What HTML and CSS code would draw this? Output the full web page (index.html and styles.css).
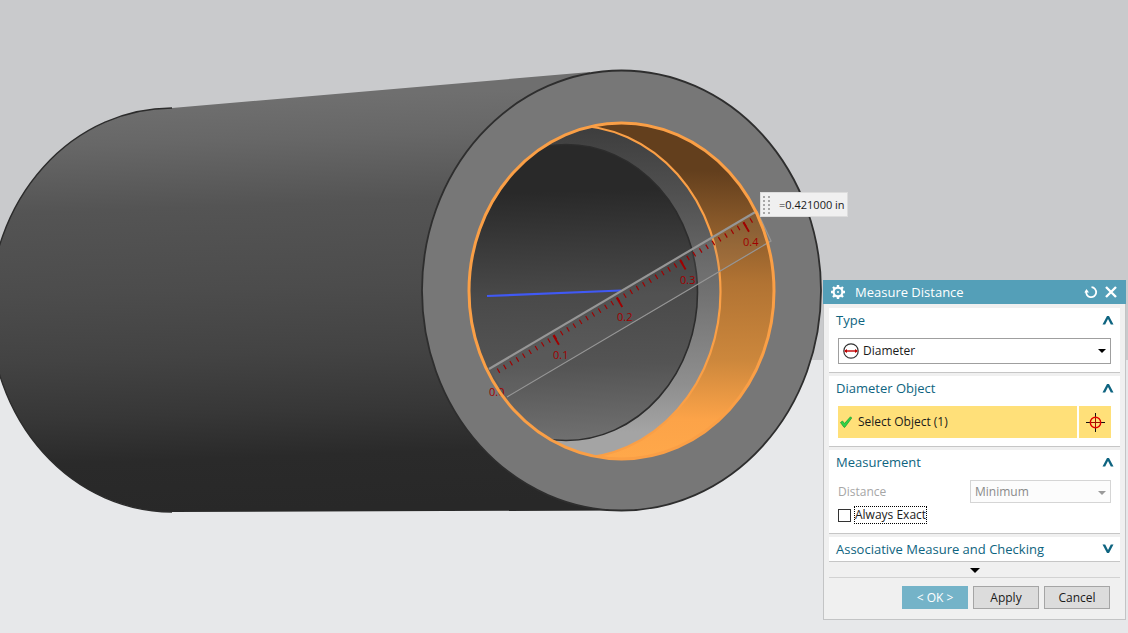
FILE: index.html
```html
<!DOCTYPE html>
<html lang="en">
<head>
    <meta charset="UTF-8">
    <meta name="viewport" content="width=device-width, initial-scale=1.0">
    <title>Measure Distance</title>
    <link rel="stylesheet" href="styles.css">
</head>
<body>
    <main class="viewport">
        <svg class="model" viewBox="0 0 1128 633" role="img" aria-label="Tube with counterbore">
            <defs>
                <linearGradient id="body-shade" gradientUnits="userSpaceOnUse" x1="200" y1="100" x2="214" y2="512">
                    <stop offset="0" stop-color="#6f6f6f"/>
                    <stop offset=".1" stop-color="#676767"/>
                    <stop offset=".26" stop-color="#545454"/>
                    <stop offset=".46" stop-color="#4c4c4c"/>
                    <stop offset=".62" stop-color="#434343"/>
                    <stop offset=".76" stop-color="#373737"/>
                    <stop offset=".87" stop-color="#2a2a2a"/>
                    <stop offset="1" stop-color="#282828"/>
                </linearGradient>
                <linearGradient id="orange-shade" gradientUnits="userSpaceOnUse" x1="680" y1="123" x2="672" y2="459">
                    <stop offset="0" stop-color="#633f1d"/>
                    <stop offset=".14" stop-color="#633f1d"/>
                    <stop offset=".3" stop-color="#8a5a2a"/>
                    <stop offset=".47" stop-color="#b17333"/>
                    <stop offset=".7" stop-color="#cc873c"/>
                    <stop offset=".88" stop-color="#fca348"/>
                    <stop offset="1" stop-color="#ffa84a"/>
                </linearGradient>
                <linearGradient id="step-shade" gradientUnits="userSpaceOnUse" x1="0" y1="126" x2="0" y2="459">
                    <stop offset="0" stop-color="#3d3d3d"/>
                    <stop offset=".2" stop-color="#505050"/>
                    <stop offset=".38" stop-color="#646464"/>
                    <stop offset=".6" stop-color="#7c7c7c"/>
                    <stop offset=".78" stop-color="#8f8f8f"/>
                    <stop offset=".92" stop-color="#a4a4a4"/>
                    <stop offset="1" stop-color="#a4a4a4"/>
                </linearGradient>
                <linearGradient id="bore-shade" gradientUnits="userSpaceOnUse" x1="560" y1="144" x2="569" y2="440">
                    <stop offset="0" stop-color="#292929"/>
                    <stop offset=".16" stop-color="#292929"/>
                    <stop offset=".34" stop-color="#3a3a3a"/>
                    <stop offset=".52" stop-color="#4a4a4a"/>
                    <stop offset=".75" stop-color="#545454"/>
                    <stop offset="1" stop-color="#707070"/>
                </linearGradient>
                <clipPath id="counterbore">
                    <ellipse cx="621.500" cy="291" rx="152" ry="168"/>
                </clipPath>
            </defs>

            <!-- tube body -->
            <path d="M172 108 L590 72 L622 510.500 L172 512 A182 202 0 0 1 172 108 Z" fill="url(#body-shade)"/>
            <path d="M172 512 A182 202 0 0 1 172 108" fill="none" stroke="#2c2c2c" stroke-width="1.400"/>
            <ellipse cx="621.500" cy="290.500" rx="199.500" ry="220" fill="#777" stroke="#2e2e2e" stroke-width="1.800"/>

            <!-- inside of the tube -->
            <g clip-path="url(#counterbore)">
                <rect x="469" y="122" width="306" height="338" fill="url(#orange-shade)"/>
                <ellipse cx="573.500" cy="292" rx="147" ry="166.500" fill="url(#step-shade)" stroke="#fa9f46" stroke-width="2.200"/>
                <ellipse cx="566" cy="292.500" rx="131.500" ry="148" fill="url(#bore-shade)" stroke="#2d2d2d" stroke-width="1.600"/>
            </g>
            <path d="M487 296 L621 290.500" stroke="#4059f5" stroke-width="2.200"/>

            <!-- ruler -->
            <path d="M489 369 L757 211 L771 242 L507 397 Z" fill="#888" fill-opacity=".12"/>
            <path d="M757 211 L771 241 L507 397" fill="none" stroke="#969696" stroke-width="1.200"/>
            <path d="M489 369 L757 211" stroke="#969696" stroke-width="2.200"/>
            <path class="ticks" d="M498 371 L752 220" stroke-width="5" stroke-dasharray=".16 .84" pathLength="40.200"/>
            <path class="ticks" d="M555.300 340.500 L747 226.500" stroke-width="11" stroke-dasharray=".026 .974" pathLength="3.026"/>
            <g class="ruler-text">
                <text x="489" y="396">0.0</text>
                <text x="553" y="359">0.1</text>
                <text x="617" y="321">0.2</text>
                <text x="680" y="284">0.3</text>
                <text x="743" y="246">0.4</text>
            </g>
            <ellipse cx="621.500" cy="291" rx="152.500" ry="168" fill="none" stroke="#fa9f46" stroke-width="3"/>
        </svg>
        <div class="readout">
            <svg width="8" height="20" viewBox="0 0 8 20" aria-hidden="true">
                <path d="M1 1V20M6 1V20" stroke="#a8a8a8" stroke-width="2" stroke-dasharray="2 2"/>
            </svg>
            <output>=0.421000 in</output>
        </div>
    </main>

    <form class="dialog" aria-labelledby="dialog-title">
        <header class="title-bar">
            <svg width="14" height="14" viewBox="0 0 14 14" aria-hidden="true">
                <circle cx="7" cy="7" r="4.400" fill="none" stroke="#fff" stroke-width="2.200"/>
                <path d="M7 0V3M7 11V14M0 7H3M11 7H14M2 2L4 4M10 10L12 12M12 2L10 4M4 10L2 12" stroke="#fff" stroke-width="2.400"/>
                <circle cx="7" cy="7" r="1" fill="#fff"/>
            </svg>
            <h1 id="dialog-title">Measure Distance</h1>
            <button type="button" class="icon-button" aria-label="Reset">
                <svg width="14" height="14" viewBox="0 0 14 14">
                    <path d="M7.500 2.200A5 5 0 1 1 2.300 6" fill="none" stroke="#fff" stroke-width="1.800"/>
                    <path d="M.3 7.500L2.500 4L5 7.500Z" fill="#fff"/>
                </svg>
            </button>
            <button type="button" class="icon-button" aria-label="Close">
                <svg width="14" height="14" viewBox="0 0 14 14">
                    <path d="M2 2L12 12M12 2L2 12" stroke="#fff" stroke-width="2.400"/>
                </svg>
            </button>
        </header>

        <div class="sections">
            <section class="group type-group">
                <div class="group-title">
                    <h2><label for="type">Type</label></h2>
                    <button type="button" class="icon-button" aria-label="Collapse Type">
                        <svg width="12" height="10" viewBox="0 0 12 10"><path class="chevron" d="M.5 9.500L5 1H7L11.500 9.500H8.800L6 4L3.200 9.500Z"/></svg>
                    </button>
                </div>
                <div class="combo type-combo">
                    <svg class="combo-icon" width="16" height="16" viewBox="0 0 16 16" aria-hidden="true">
                        <circle cx="8" cy="8" r="7.200" fill="#fff" stroke="#333" stroke-width="1.200"/>
                        <path d="M2 8H14" stroke="#c00000" stroke-width="1.400"/>
                        <path d="M1 8L4 6V10ZM15 8L12 6V10Z" fill="#c00000"/>
                    </svg>
                    <select id="type"><option>Diameter</option></select>
                    <svg class="combo-arrow" width="8" height="4" viewBox="0 0 8 4" aria-hidden="true"><path d="M0 0H8L4 4Z"/></svg>
                </div>
            </section>

            <section class="group object-group">
                <div class="group-title">
                    <h2>Diameter Object</h2>
                    <button type="button" class="icon-button" aria-label="Collapse Diameter Object">
                        <svg width="12" height="10" viewBox="0 0 12 10"><path class="chevron" d="M.5 9.500L5 1H7L11.500 9.500H8.800L6 4L3.200 9.500Z"/></svg>
                    </button>
                </div>
                <div class="select-row">
                    <button type="button" class="select-object">
                        <svg width="12" height="12" viewBox="0 0 12 12" aria-hidden="true">
                            <path d="M.5 6.500L2.500 5L4.500 7.500L10.500 .8L11.700 2L4.800 11.300H4Z" fill="#2fd545" stroke="#1f9e35" stroke-width=".8"/>
                        </svg>
                        Select Object (1)
                    </button>
                    <button type="button" class="point-button" aria-label="Select point">
                        <svg width="20" height="20" viewBox="0 0 20 20">
                            <path d="M10.500 1V20M1 10.500H20" stroke="#111" stroke-width="1"/>
                            <circle cx="10.500" cy="10.500" r="5.200" fill="none" stroke="#e00000" stroke-width="1.400"/>
                            <path d="M10.500 6V15M6 10.500H15" stroke="#a01000" stroke-width="1"/>
                        </svg>
                    </button>
                </div>
            </section>

            <section class="group measure-group">
                <div class="group-title">
                    <h2>Measurement</h2>
                    <button type="button" class="icon-button" aria-label="Collapse Measurement">
                        <svg width="12" height="10" viewBox="0 0 12 10"><path class="chevron" d="M.5 9.500L5 1H7L11.500 9.500H8.800L6 4L3.200 9.500Z"/></svg>
                    </button>
                </div>
                <div class="distance-row">
                    <label for="distance">Distance</label>
                    <div class="combo distance-combo">
                        <select id="distance" disabled><option>Minimum</option></select>
                        <svg class="combo-arrow" width="8" height="4" viewBox="0 0 8 4" aria-hidden="true"><path d="M0 0H8L4 4Z"/></svg>
                    </div>
                </div>
                <div class="check-row">
                    <input type="checkbox" id="exact">
                    <label for="exact">Always Exact</label>
                </div>
            </section>

            <section class="group">
                <div class="group-title">
                    <h2>Associative Measure and Checking</h2>
                    <button type="button" class="icon-button" aria-label="Expand Associative Measure and Checking">
                        <svg width="12" height="10" viewBox="0 0 12 10"><path class="chevron" d="M.5 .5L5 9H7L11.500 .5H8.800L6 6L3.200 .5Z"/></svg>
                    </button>
                </div>
            </section>
        </div>

        <button type="button" class="more" aria-label="Show more">
            <svg width="10" height="5" viewBox="0 0 10 5"><path d="M0 0H10L5 5Z"/></svg>
        </button>

        <footer class="actions">
            <button type="submit" class="ok">&lt; OK &gt;</button>
            <button type="button">Apply</button>
            <button type="button">Cancel</button>
        </footer>
    </form>
</body>
</html>
```

FILE: styles.css
```css
*{
    box-sizing: border-box;
}
body{
    margin: 0;
    min-height: 100vh;
    overflow: hidden;
    font-family: "Open Sans", "Noto Sans", sans-serif;
    font-size: 12px;
    line-height: 16px;
    color: #1a1a1a;
    background: linear-gradient(#c9cacc 360px, #e7e8ea 360px);
}
h1, h2{
    margin: 0;
    flex: 1;
    font-size: 13px;
    font-weight: 400;
}
button, select, input{
    margin: 0;
    font: inherit;
    color: inherit;
}
svg{
    display: block;
}

/* model view */
.viewport{
    position: relative;
}
.model{
    width: 100%;
    height: auto;
}
.ticks{
    fill: none;
    stroke: #a00000;
}
.ruler-text{
    font-size: 11px;
    fill: #a00000;
}
.readout{
    position: absolute;
    left: 760px;
    top: 192px;
    display: flex;
    align-items: center;
    gap: 8px;
    height: 25px;
    padding: 0 2px;
    font-size: 11px;
    background: #f0f0f0;
    border: 1px solid #dcdcdc;
    white-space: nowrap;
}

/* dialog window */
.dialog{
    position: absolute;
    top: 280px;
    right: 2px;
    width: 303px;
    background: #f0f0f0;
    border: 1px solid #c3c4c5;
    border-top: 0;
}
.title-bar{
    display: flex;
    align-items: center;
    gap: 6px;
    height: 24px;
    margin: 0 -1px;
    padding: 0 8px;
    background: #549fb8;
    color: #fff;
}
.title-bar h1{
    padding-left: 4px;
}
.icon-button{
    padding: 0;
    border: 0;
    background: none;
}
.sections{
    display: flex;
    flex-direction: column;
    gap: 3px;
    padding: 4px 5px 0;
}
.group{
    padding: 0 9px;
    background: #fff;
    border-bottom: 1px solid #c6c6c6;
}
.group-title{
    display: flex;
    align-items: center;
    height: 24px;
    margin: 0 -3px 0 -2px;
}
.group-title h2{
    line-height: 24px;
    color: #0e6480;
}
.chevron{
    fill: #0e6480;
}
.type-group{
    padding-bottom: 8px;
}
.object-group{
    padding-bottom: 8px;
}
.measure-group{
    padding-bottom: 9px;
}

.combo{
    position: relative;
}
.combo select{
    display: block;
    width: 100%;
    appearance: none;
    background: #fff;
    border: 1px solid #9f9f9f;
    border-radius: 0;
}
.combo-icon{
    position: absolute;
    left: 5px;
    top: 5px;
}
.combo-arrow{
    position: absolute;
    right: 5px;
    top: 11px;
}
.type-combo{
    margin-top: 6px;
}
.type-combo select{
    height: 26px;
    padding: 0 24px;
}
.select-row{
    display: flex;
    gap: 2px;
    height: 32px;
    margin-top: 6px;
}
.select-row button{
    border: 0;
    background: #ffe079;
}
.select-object{
    display: flex;
    flex: 1;
    align-items: center;
    gap: 6px;
    padding: 0 2px;
}
.point-button{
    width: 32px;
    padding: 0 6px;
}
.distance-row{
    display: flex;
    justify-content: space-between;
    align-items: center;
    margin-top: 6px;
    color: #a6a6a6;
}
.distance-combo{
    width: 141px;
    fill: #9a9a9a;
}
.distance-combo select{
    height: 23px;
    padding: 0 4px;
    color: #8a8a8a;
    background: #fcfcfc;
    border-color: #d5d5d5;
    opacity: 1;
}
.check-row{
    display: flex;
    align-items: center;
    gap: 3px;
    margin-top: 3px;
}
.check-row input{
    width: 13px;
    height: 13px;
    appearance: none;
    border: 1px solid #333;
    background: #fff;
}
.check-row label{
    border: 1px dotted #000;
}

.more{
    display: block;
    width: 291px;
    height: 16px;
    margin: 0 5px;
    padding: 2px 0 0;
    border: 0;
    border-bottom: 1px solid #d2d2d2;
    background: none;
}
.more svg{
    margin: 0 auto;
}
.actions{
    display: flex;
    justify-content: flex-end;
    gap: 5px;
    padding: 8px 15px 10px;
}
.actions button{
    width: 66px;
    height: 23px;
    padding: 0;
    border: 1px solid #a5a5a5;
    background: #dcdcdc;
}
.actions .ok{
    color: #fff;
    background: #74b3c8;
    border-color: #74b3c8;
}
```
